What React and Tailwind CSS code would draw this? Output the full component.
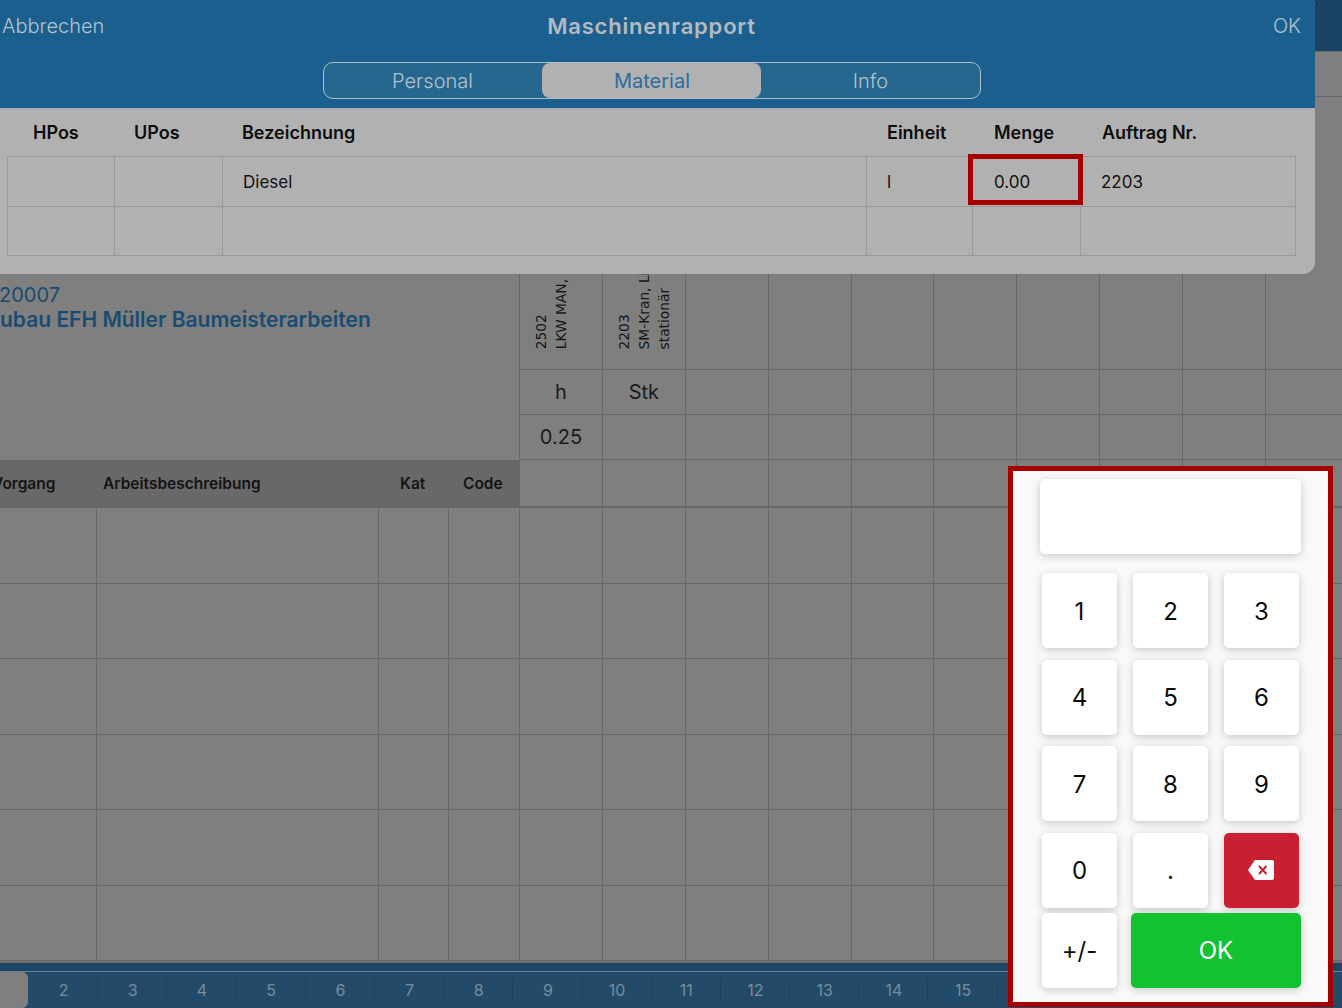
const rowHeights = [76, 75, 76, 75, 76, 75];
const gridRows = [
  { h: "h-[45px]", key: "a" },
  { h: "h-[273px]", key: "b" },
  { h: "h-[45px]", key: "c" },
  { h: "h-[45px]", key: "d" },
  { h: "h-[48px]", key: "e" },
  { h: "h-[76px]", key: "f" },
  { h: "h-[75px]", key: "g" },
  { h: "h-[76px]", key: "h" },
  { h: "h-[75px]", key: "i" },
  { h: "h-[76px]", key: "j" },
  { h: "h-[75px]", key: "k" },
];

function cellContent(rowKey, col) {
  if (rowKey === "b" && col === 0)
    return (
      <div className="h-full flex items-end justify-center pb-[20px]">
        <div className="[writing-mode:vertical-rl] rotate-180 whitespace-nowrap text-[13.8px] leading-[20px] text-[#161616] font-['DejaVu_Sans',sans-serif]">
          <div>2502</div>
          <div>LKW MAN, Kipper</div>
          <div>&nbsp;</div>
        </div>
      </div>
    );
  if (rowKey === "b" && col === 1)
    return (
      <div className="h-full flex items-end justify-center pb-[20px]">
        <div className="[writing-mode:vertical-rl] rotate-180 whitespace-nowrap text-[13.8px] leading-[20px] text-[#161616] font-['DejaVu_Sans',sans-serif]">
          <div>2203</div>
          <div>SM-Kran, Liebherr</div>
          <div>stationär</div>
        </div>
      </div>
    );
  if (rowKey === "c" && col === 0) return <div className="h-full flex items-center justify-center text-[20px] text-[#1a1a1a]">h</div>;
  if (rowKey === "c" && col === 1) return <div className="h-full flex items-center justify-center text-[20px] text-[#1a1a1a]">Stk</div>;
  if (rowKey === "d" && col === 0) return <div className="h-full flex items-center justify-center text-[20px] text-[#1a1a1a]">0.25</div>;
  return null;
}

function Key({ children, className = "bg-white pt-[2px]" }) {
  return (
    <div className={`h-[75px] w-[75px] rounded-[5px] shadow-[0_2px_8px_rgba(0,0,0,0.2)] flex items-center justify-center text-[24px] text-[#0c0c0c] ${className}`}>
      {children}
    </div>
  );
}

const tableCols = "grid-cols-[107px_108px_644px_106px_108px_215px]";

export default function App() {
  return (
    <div className="relative w-[1342px] h-[1008px] overflow-hidden bg-[#7f7f7f] font-['Inter',sans-serif] flex flex-col">
      {/* dimmed top bar */}
      <div className="h-[52px] shrink-0 bg-[#1b4464] border-b border-[#686868]" />

      {/* dimmed page */}
      <div className="flex h-[909px] shrink-0">
        <div className="w-[519px] shrink-0 flex flex-col">
          <div className="h-[408px] pt-[231px] text-[#1a4c72]">
            <div className="text-[20px] leading-[24px] -ml-[1px]">20007</div>
            <div className="text-[21px] leading-[26px] font-semibold whitespace-nowrap">ubau EFH Müller Baumeisterarbeiten</div>
          </div>
          <div className="h-[48px] bg-[#686868] border-b-2 border-[#686868] grid grid-cols-[97px_282px_70px_70px] items-center text-[15.5px] font-semibold text-[#141414] pt-[2px]">
            <div className="whitespace-nowrap -ml-[8px]">Vorgang</div>
            <div className="pl-[6px]">Arbeitsbeschreibung</div>
            <div className="pl-[21px]">Kat</div>
            <div className="pl-[14px]">Code</div>
          </div>
          {rowHeights.map((h, i) => (
            <div key={i} style={{ height: h }} className="grid grid-cols-[97px_282px_70px_70px] border-b border-[#686868]">
              <div className="border-r border-[#686868]" />
              <div className="border-r border-[#686868]" />
              <div className="border-r border-[#686868]" />
              <div />
            </div>
          ))}
        </div>
        <div className="flex-1 flex flex-col border-l border-[#686868] min-w-0">
          {gridRows.map((r) => (
            <div key={r.key} className={`${r.h} shrink-0 flex ${r.key === "e" ? "border-b-2" : "border-b"} border-[#686868]`}>
              {Array.from({ length: 10 }).map((_, c) => (
                <div key={c} className="w-[82.9px] shrink-0 border-r border-[#686868]">
                  {cellContent(r.key, c)}
                </div>
              ))}
            </div>
          ))}
        </div>
      </div>

      {/* bottom tab bar */}
      <div className="h-[47px] shrink-0 border-t-2 border-[#6f6f6f] bg-[#1a4565] flex flex-col">
        <div className="h-[8px] shrink-0" />
        <div className="flex-1 bg-[#234b69] border-t border-[#6d8494] flex items-stretch">
          <div className="w-[28px] mr-[1px] shrink-0 bg-[#7f7f7f] rounded-r-[6px]" />
          {Array.from({ length: 19 }).map((_, i) => (
            <div key={i} className="w-[69.2px] shrink-0 flex items-center justify-center text-[16px] text-[#778d9e] relative">
              {i + 2}
              <div className="absolute right-0 top-[6px] bottom-[6px] w-px bg-[#1d4260]" />
            </div>
          ))}
        </div>
      </div>

      {/* modal */}
      <div className="absolute left-0 -top-[6px] w-[1315px] h-[280px] rounded-r-[12px] overflow-hidden bg-[#b1b1b1] flex flex-col">
        <div className="h-[115px] shrink-0 bg-[#1b5f8e] border-b border-[#a3a9ad] flex flex-col pt-[6px]">
          <div className="h-[52px] shrink-0 flex items-center justify-between pl-[2px] pr-[14px] text-[20px] text-[#b3c3ce] relative font-light">
            <span>Abbrechen</span>
            <span className="absolute left-0 right-0 text-center text-[22px] tracking-[0.8px] font-semibold text-[#b4bbc0] pr-[12px]">Maschinenrapport</span>
            <span>OK</span>
          </div>
          <div className="flex justify-center pr-[12px] pt-[10px]">
            <div className="w-[658px] h-[37px] rounded-[10px] border border-[#b0bec8] bg-[#26678f] flex items-stretch text-[20px] font-light text-[#b3c3ce]">
              <div className="w-[218px] pt-[1px] flex items-center justify-center">Personal</div>
              <div className="w-[219px] pt-[1px] pl-[2px] rounded-[8px] bg-[#b1b1b1] text-[#2a6d9d] font-normal flex items-center justify-center">Material</div>
              <div className="flex-1 pt-[1px] pl-[1px] flex items-center justify-center">Info</div>
            </div>
          </div>
        </div>
        <div className="pl-[7px] flex flex-col">
          <div className={`h-[47px] shrink-0 grid ${tableCols} items-center text-[18px] font-semibold text-[#0d0d0d]`}>
            <div className="pl-[26px]">HPos</div>
            <div className="pl-[20px]">UPos</div>
            <div className="pl-[20px]">Bezeichnung</div>
            <div className="pl-[21px]">Einheit</div>
            <div className="pl-[22px]">Menge</div>
            <div className="pl-[22px]">Auftrag Nr.</div>
          </div>
          <div className="w-[1289px] border-t border-l border-[#9a9a9a] text-[17px] text-[#111111]">
            <div className={`h-[49.5px] grid ${tableCols} border-b border-[#9a9a9a]`}>
              <div className="border-r border-[#9a9a9a]" />
              <div className="border-r border-[#9a9a9a]" />
              <div className="border-r border-[#9a9a9a] flex items-center pl-[20px] pt-[2px]">Diesel</div>
              <div className="border-r border-[#9a9a9a] flex items-center pl-[20px] pt-[2px]">l</div>
              <div className="relative flex items-center pl-[21px] pt-[2px]">
                0.00
                <div className="absolute -left-[5px] -top-[3px] w-[115px] h-[51px] border-[5px] border-[#a50000]" />
              </div>
              <div className="border-r border-[#9a9a9a] flex items-center pl-[20px] pt-[2px]">2203</div>
            </div>
            <div className={`h-[49.5px] grid ${tableCols} border-b border-[#9a9a9a]`}>
              <div className="border-r border-[#9a9a9a]" />
              <div className="border-r border-[#9a9a9a]" />
              <div className="border-r border-[#9a9a9a]" />
              <div className="border-r border-[#9a9a9a]" />
              <div className="border-r border-[#9a9a9a]" />
              <div className="border-r border-[#9a9a9a]" />
            </div>
          </div>
        </div>
      </div>

      {/* number pad */}
      <div className="absolute left-[1008px] top-[466px] w-[325px] h-[541px] border-[5px] border-[#a50000] bg-[#f9f9f9] flex flex-col items-start pl-[27px] pt-[8px]">
        <div className="w-[261px] h-[75px] rounded-[5px] bg-white shadow-[0_2px_8px_rgba(0,0,0,0.2)] shrink-0" />
        <div className="ml-[2px] mt-[19px] grid grid-cols-[75px_75px_75px] gap-x-[16px] gap-y-[11.67px]">
          {["1", "2", "3", "4", "5", "6", "7", "8", "9", "0", "."].map((k) => (
            <Key key={k}>{k}</Key>
          ))}
          <Key className="bg-[#c92031] pr-[2px]">
            <svg width="26" height="20" viewBox="0 0 26 20" aria-hidden="true">
              <path d="M7 0H24a2 2 0 0 1 2 2V18a2 2 0 0 1-2 2H7L0 10Z" fill="#ffffff" />
              <path d="M11 6l7.500 8M18.500 6L11 14" stroke="#c92031" strokeWidth="2" fill="none" />
            </svg>
          </Key>
        </div>
        <div className="ml-[2px] mt-[5px] flex">
          <Key>+/-</Key>
          <div className="ml-[14px] w-[170px] h-[75px] pt-[2px] rounded-[5px] bg-[#12c230] shadow-[0_2px_8px_rgba(0,0,0,0.2)] flex items-center justify-center text-[24px] text-white">
            OK
          </div>
        </div>
      </div>
    </div>
  );
}
